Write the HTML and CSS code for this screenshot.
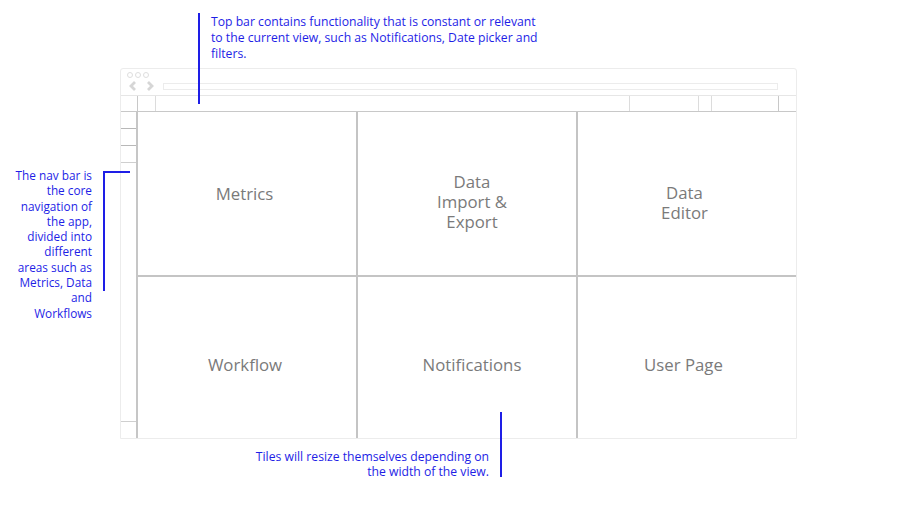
FILE: index.html
```html
<!DOCTYPE html>
<html>
<head>
<meta charset="utf-8">
<link rel="stylesheet" href="styles.css">
</head>
<body>
<div class="page">
  <div class="window">
    <div class="chrome">
      <div class="lights"><span></span><span></span><span></span></div>
      <div class="navrow">
        <svg class="arrows" width="30" height="10" viewBox="0 0 30 10"><path d="M10 1 L6 5 L10 9" fill="none" stroke="#d6d6d6" stroke-width="2.8"/><path d="M23 1 L27 5 L23 9" fill="none" stroke="#d6d6d6" stroke-width="2.8"/></svg>
        <div class="address"></div>
      </div>
    </div>
    <div class="topbar">
      <div class="tb c1"></div>
      <div class="tb c2"></div>
      <div class="tb c3"></div>
      <div class="tb c4"></div>
      <div class="tb c5"></div>
      <div class="tb c6"></div>
      <div class="tb c7"></div>
    </div>
    <div class="main">
      <div class="nav">
        <div class="navitem"></div>
        <div class="navitem"></div>
        <div class="navitem"></div>
        <div class="navfill"></div>
        <div class="navbottom"></div>
      </div>
      <div class="tiles">
        <div class="tile t1">Metrics</div>
        <div class="tile t2">Data<br>Import &amp;<br>Export</div>
        <div class="tile t3">Data<br>Editor</div>
        <div class="tile t4">Workflow</div>
        <div class="tile t5">Notifications</div>
        <div class="tile t6">User Page</div>
      </div>
    </div>
  </div>

  <div class="note note-top">
    <div class="vline vline-top"></div>
    <p>Top bar contains functionality that is constant or relevant<br>to the current view, such as Notifications, Date picker and<br>filters.</p>
  </div>

  <div class="note note-left">
    <p>The nav bar is<br>the core<br>navigation of<br>the app,<br>divided into<br>different<br>areas such as<br>Metrics, Data<br>and<br>Workflows</p>
    <div class="bracket"></div>
  </div>

  <div class="note note-bottom">
    <p>Tiles will resize themselves depending on<br>the width of the view.</p>
    <div class="vline vline-bottom"></div>
  </div>
</div>
</body>
</html>
```

FILE: styles.css
```css
* { box-sizing: border-box; }
html, body { margin: 0; padding: 0; background: #fff; }
body { font-family: "Open Sans", "Liberation Sans", sans-serif; }

.page {
  position: relative;
  width: 900px;
  height: 506px;
  padding: 68px 0 0 120px;
}

.window {
  width: 677px;
  height: 371px;
  border: 1px solid #ececec;
  border-top-left-radius: 3px;
  border-top-right-radius: 3px;
  display: flex;
  flex-direction: column;
}

.chrome {
  height: 27px;
  padding: 3px 0 0 6px;
  border-bottom: 1px solid #e6e6e6;
}
.lights { display: flex; gap: 2px; height: 7px; }
.lights span {
  width: 6px; height: 6px;
  border: 1px solid #dedede;
  border-radius: 50%;
}
.navrow { display: flex; align-items: center; margin-top: 2px; }
.arrows { margin-left: -2px; }
.address {
  margin-left: 8px;
  width: 615px;
  height: 7px;
  border: 1px solid #ececec;
}

.topbar {
  display: flex;
  height: 16px;
  border-bottom: 1px solid #c8c8c8;
}
.tb { border-right: 1px solid #dcdcdc; height: 100%; }
.c1 { width: 17px; border-right-color: #c8c8c8; }
.c2 { width: 18px; }
.c3 { width: 474px; }
.c4 { width: 69px; }
.c5 { width: 13px; }
.c6 { width: 67px; border-right-color: #c8c8c8; }
.c7 { flex: 1; border-right: none; }

.main { flex: 1; display: flex; }
.nav {
  width: 17px;
  border-right: 2px solid #c6c6c6;
  display: flex;
  flex-direction: column;
}
.navitem { height: 17px; border-bottom: 1px solid #b8b8b8; }
.navitem:nth-child(3) { border-bottom-color: #cfcfcf; }
.navfill { flex: 1; border-bottom: 1px solid #cfcfcf; }
.navbottom { height: 16px; }

.tiles {
  flex: 1;
  display: grid;
  grid-template-columns: 220px 220px 1fr;
  grid-template-rows: 165px 1fr;
}
.tile {
  display: flex;
  align-items: center;
  justify-content: center;
  text-align: center;
  color: #7a7a7a;
  font-size: 16.8px;
  line-height: 20px;
  border-right: 2px solid #c4c4c4;
  border-bottom: 2px solid #c4c4c4;
}
.tile:nth-child(3n) { border-right: none; }
.tile:nth-child(n+4) { border-bottom: none; padding-top: 14px; }
.t1 { padding-right: 5px; }
.t2 { padding-top: 16px; padding-left: 10px; }
.t3 { padding-top: 19px; padding-right: 5px; }
.t4 { padding-right: 4px; }
.t5 { padding-left: 10px; }
.t6 { padding-right: 7px; }

.note {
  position: absolute;
  color: #1e1ee6;
  font-size: 12.2px;
  line-height: 16px;
}
.note p { margin: 0; }

.note-top { left: 198px; top: 13px; display: flex; }
.vline { width: 2px; background: #1e1ee6; }
.vline-top { height: 91px; margin-right: 11px; }
.note-top p { padding-top: 1px; }

.note-left { left: 0; top: 168px; display: flex; }
.note-left p { width: 92px; text-align: right; line-height: 15.3px; font-size: 11.8px; }
.bracket {
  margin-left: 11px;
  margin-top: 3px;
  width: 27px;
  height: 120px;
  border-left: 2px solid #1e1ee6;
  border-top: 2px solid #1e1ee6;
}

.note-bottom { right: 398px; top: 412px; display: flex; }
.note-bottom p { text-align: right; padding-top: 37px; line-height: 15px; }
.vline-bottom { height: 65px; margin-left: 11px; }
```
